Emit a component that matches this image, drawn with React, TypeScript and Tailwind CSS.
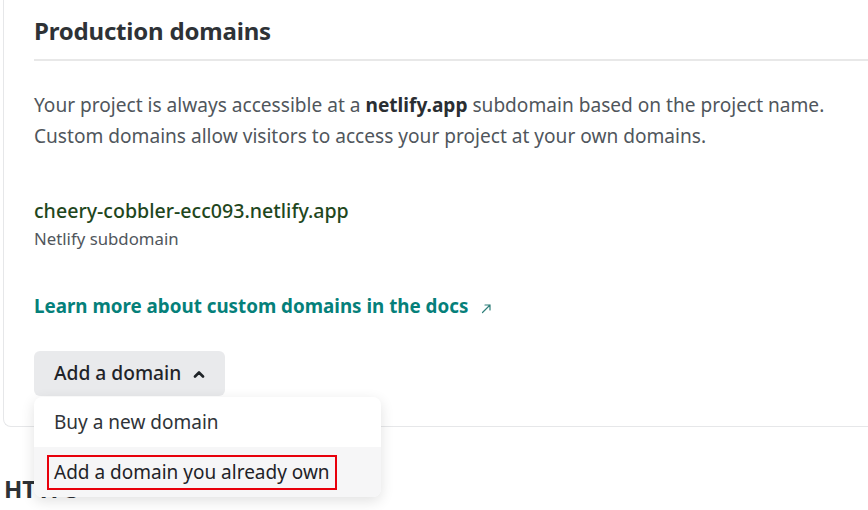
import React from 'react'

const font = { fontFamily: '"Noto Sans", "Open Sans", sans-serif' }

function ExternalArrow() {
  return (
    <svg width="11" height="11" viewBox="0 0 11 11" fill="none" className="ml-[13px] mt-[4px]">
      <path d="M1.5 9.5 L9 2 M4 2 H9 V7" stroke="#2f7f7a" strokeWidth="1.2" strokeLinecap="round" strokeLinejoin="round" />
    </svg>
  )
}

function ChevronUp() {
  return (
    <svg width="12" height="8" viewBox="0 0 12 8" fill="none">
      <path d="M2 6.5 L6 2.5 L10 6.5" stroke="#1f2328" strokeWidth="2.6" strokeLinecap="round" strokeLinejoin="round" />
    </svg>
  )
}

export default function App() {
  return (
    <div className="relative h-[510px] w-[868px] overflow-hidden bg-white text-[#2f3338]" style={font}>
      {/* card */}
      <div className="ml-[3px] mr-[-12px] rounded-bl-lg border-b border-l border-[#e6e7e9] pb-[30px] pl-[30px] pt-[15px]">
        <h2 className="text-[24px] font-bold leading-[32px] tracking-[-0.2px] text-[#2e3236]">Production domains</h2>
        <div className="mt-[12px] h-[2px] bg-[#e8e8e8]" />

        <p className="mt-[29px] text-[19.1px] leading-[31px] text-[#50565c]">
          Your project is always accessible at a <span className="font-bold text-[#2a2e32]">netlify.app</span> subdomain based on the project name.
          <br />
          Custom domains allow visitors to access your project at your own domains.
        </p>

        <div className="mt-[47px] text-[19.6px] font-medium leading-[24px] text-[#1f471d]">cheery-cobbler-ecc093.netlify.app</div>
        <div className="mt-[5px] text-[16.8px] leading-[22px] text-[#50565c]">Netlify subdomain</div>

        <a className="mt-[44px] flex items-center text-[18.8px] font-bold leading-[24px] text-[#05807a]">
          Learn more about custom domains in the docs
          <ExternalArrow />
        </a>

        {/* add domain button + open menu */}
        <div className="relative mt-[33px] w-fit">
          <button className="flex h-[45px] items-center gap-[12px] rounded-md bg-[#e9eaec] pl-[20px] pr-[20px] text-[19.2px] font-medium text-[#1f2328]">
            Add a domain
            <ChevronUp />
          </button>
          <div className="absolute left-0 top-full z-10 mt-[1px] w-[347px] overflow-hidden rounded-lg bg-white shadow-[0_4px_14px_rgba(0,0,0,0.12)]">
            <div className="flex h-[50px] items-center px-[20px] text-[19px] text-[#2f3338]">Buy a new domain</div>
            <div className="flex h-[50px] items-center bg-[#f6f6f7] px-[13px] text-[19px] text-[#1f2328]">
              <span className="border-2 border-[#e8000c] px-[5px] leading-[31px]">Add a domain you already own</span>
            </div>
          </div>
        </div>
      </div>

      <h2 className="ml-[4px] mt-[46px] text-[24px] font-bold leading-[32px] text-[#2e3236]">HTTPS</h2>
    </div>
  )
}
